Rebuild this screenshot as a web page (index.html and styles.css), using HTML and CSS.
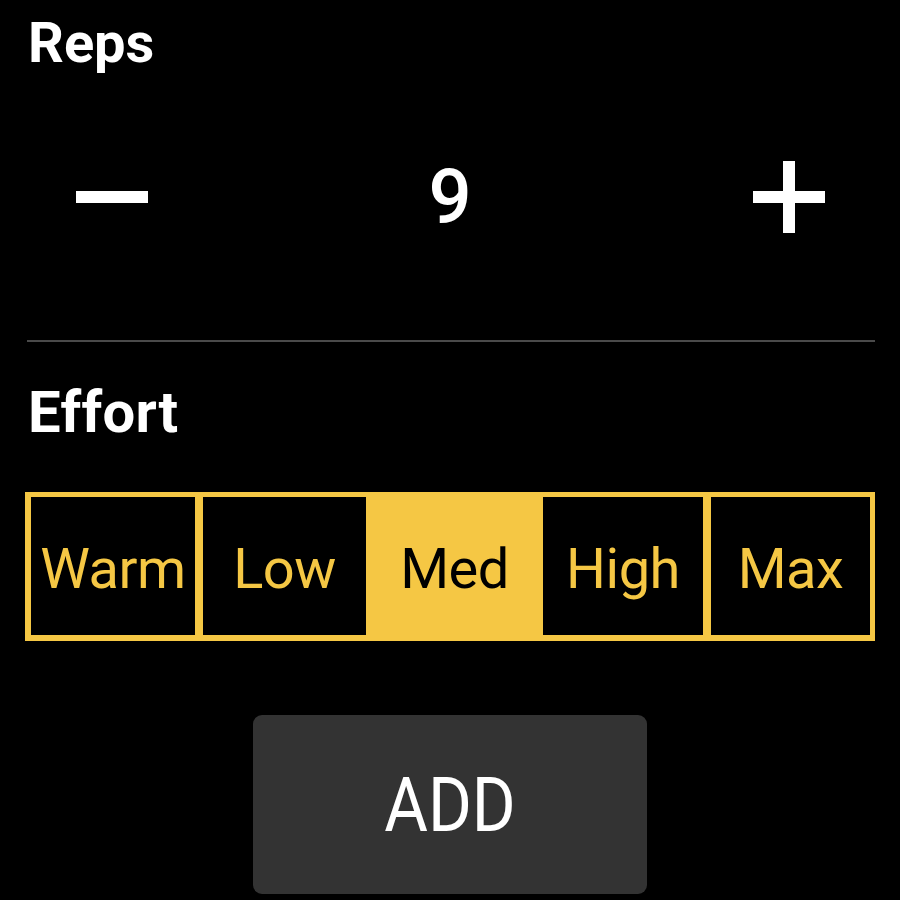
FILE: index.html
```html
<!DOCTYPE html>
<html lang="en">
<head>
  <meta charset="UTF-8">
  <meta name="viewport" content="width=device-width, initial-scale=1.0">
  <title>Log Set</title>
  <link rel="stylesheet" href="styles.css">
</head>
<body>
  <div class="screen">
    <!-- Reps -->
    <h2 class="label">Reps</h2>
    <div class="stepper">
      <button class="step-btn" aria-label="Decrease">
        <svg viewBox="0 0 72 72" width="72" height="72">
          <line x1="1" y1="36" x2="71" y2="36" stroke="#fff" stroke-width="12" stroke-linecap="round"/>
        </svg>
      </button>
      <div class="step-value">9</div>
      <button class="step-btn" aria-label="Increase">
        <svg viewBox="0 0 72 72" width="72" height="72">
          <line x1="1" y1="36" x2="71" y2="36" stroke="#fff" stroke-width="12" stroke-linecap="round"/>
          <line x1="36" y1="1" x2="36" y2="71" stroke="#fff" stroke-width="12" stroke-linecap="round"/>
        </svg>
      </button>
    </div>

    <div class="divider"></div>

    <!-- Effort -->
    <h2 class="label label-effort">Effort</h2>
    <div class="segments">
      <div class="segment">Warm</div>
      <div class="segment">Low</div>
      <div class="segment active">Med</div>
      <div class="segment">High</div>
      <div class="segment">Max</div>
    </div>

    <div class="actions">
      <button class="btn-add"><span>ADD</span></button>
    </div>
  </div>
</body>
</html>
```

FILE: styles.css
```css
/* Global */
html, body {
  margin: 0;
  padding: 0;
  background-color: #000;
}
body {
  font-family: Roboto, 'Liberation Sans', sans-serif;
  color: #fff;
  width: 900px;
  height: 900px;
  overflow: hidden;
}
.screen {
  padding: 15px 25px 0 25px;
}
button {
  font-family: inherit;
  border: none;
  padding: 0;
  cursor: pointer;
}

/* Section labels */
.label {
  margin: 0 0 0 3px;
  font-size: 56px;
  font-weight: bold;
  line-height: 1;
  height: 56px;
}
.label-effort {
  margin-top: 41px;
  font-size: 58px;
  height: 58px;
  letter-spacing: 0.3px;
}

/* Reps stepper */
.stepper {
  display: grid;
  grid-template-columns: 1fr 1fr 1fr;
  align-items: center;
  height: 80px;
  margin-top: 86px;
}
.step-btn {
  background: none;
  width: 72px;
  height: 72px;
  display: flex;
}
.step-btn:first-child {
  margin-left: 51px;
}
.step-btn:last-child {
  justify-self: end;
  margin-right: 50px;
}
.step-value {
  text-align: center;
  font-size: 76px;
  font-weight: 500;
  line-height: 1;
}

.divider {
  height: 2px;
  background-color: #4a4a4a;
  margin: 103px 0 0 2px;
}

/* Effort segments */
.segments {
  display: grid;
  grid-template-columns: 164px 163px 161px 160px 1fr;
  gap: 8px;
  height: 138px;
  margin-top: 51px;
  padding: 5px 5px 6px 6px;
  background-color: #f5c744;
}
.segment {
  background-color: #000;
  color: #f5c744;
  font-size: 56px;
  letter-spacing: -0.5px;
  display: flex;
  align-items: center;
  justify-content: center;
  padding-top: 5px;
  overflow: hidden;
  white-space: nowrap;
}
.segment.active {
  background-color: #f5c744;
  color: #000;
}

/* Add button */
.actions {
  display: flex;
  justify-content: center;
  margin-top: 74px;
}
.btn-add {
  width: 394px;
  height: 179px;
  background-color: #333;
  color: #fff;
  border-radius: 9px;
  font-size: 67px;
  font-weight: 400;
}
.btn-add span {
  display: inline-block;
  transform: scaleY(1.13);
}
```
